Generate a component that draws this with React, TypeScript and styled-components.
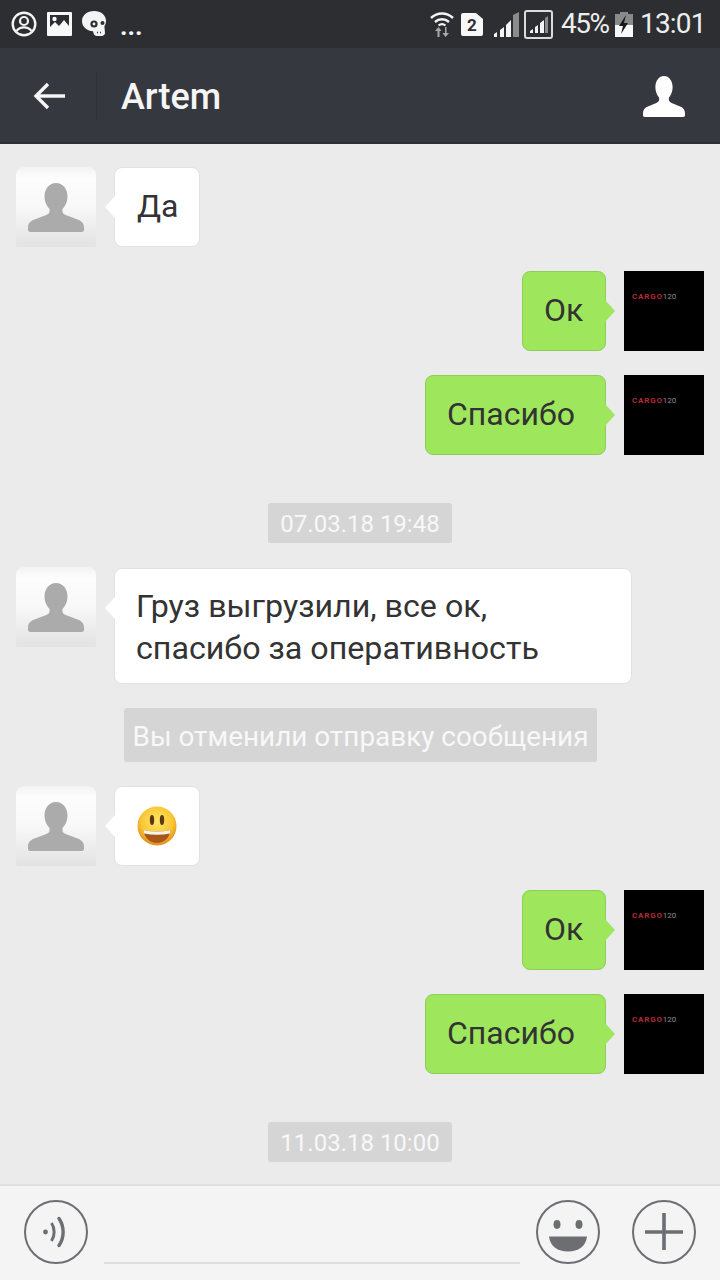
import React from "react";
import styled, { createGlobalStyle } from "styled-components";

const Global = createGlobalStyle`
  html, body { margin: 0; padding: 0; background: #ebebeb; }
  * { box-sizing: border-box; }
`;

const Screen = styled.div`
  width: 720px;
  height: 1280px;
  display: flex;
  flex-direction: column;
  overflow: hidden;
  font-family: Roboto, "Noto Sans", sans-serif;
  background: #ebebeb;
`;

const StatusBar = styled.div`
  height: 48px;
  flex: none;
  background: #2c2e31;
  display: flex;
  align-items: center;
  justify-content: space-between;
  padding: 0 16px 0 11px;
  color: #f4f4f4;
`;

const StatusGroup = styled.div<{ $gap: number }>`
  display: flex;
  align-items: center;
  gap: ${(p) => p.$gap}px;
`;

const Dots = styled.span`
  font-size: 26px;
  line-height: 28px;
  font-weight: 700;
  margin: 4px 0 0 1px;
`;

const StatusText = styled.span<{ $squeeze: number; $width: number }>`
  display: block;
  width: ${(p) => p.$width}px;
  font-size: 28px;
  line-height: 32px;
  white-space: nowrap;
  letter-spacing: ${(p) => p.$squeeze}px;
  color: #eeeeee;
`;

const Header = styled.header`
  height: 96px;
  flex: none;
  background: #36383f;
  border-bottom: 2px solid #2c2e33;
  display: flex;
  align-items: center;
  padding: 2px 35px 0 33px;
`;

const BackButton = styled.div`
  display: flex;
  align-items: center;
  width: 64px;
  height: 48px;
  border-right: 1px solid #2e3036;
`;

const Title = styled.h1`
  flex: 1;
  margin: 1px 0 0 24px;
  font-size: 36px;
  line-height: 40px;
  font-weight: 500;
  color: #f5f5f5;
`;

const Chat = styled.main`
  flex: 1;
  min-height: 0;
  display: flex;
  flex-direction: column;
  gap: 24px;
  padding: 23px 16px 0;
  overflow: hidden;
`;

const Row = styled.div<{ $mine?: boolean }>`
  display: flex;
  flex: none;
  align-items: flex-start;
  justify-content: ${(p) => (p.$mine ? "flex-end" : "flex-start")};
  gap: 18px;
`;

const Avatar = styled.div`
  width: 80px;
  height: 80px;
  flex: none;
  border-radius: 8px 8px 2px 2px;
  background: linear-gradient(#f3f3f3 0%, #fdfdfd 14%, #f8f8f8 50%, #e2e2e2 100%);
  display: flex;
  align-items: center;
  justify-content: center;
`;

const LogoAvatar = styled.div`
  width: 80px;
  height: 80px;
  flex: none;
  background: #000000;
  padding: 21px 0 0 8px;
  font-size: 8px;
  line-height: 9px;
  font-weight: 700;
  letter-spacing: 0.8px;
  color: #b52b35;
`;

const LogoLight = styled.span`
  color: #8d8d8d;
  font-weight: 400;
  letter-spacing: 0;
`;

const Bubble = styled.div<{ $mine?: boolean; $w: number }>`
  position: relative;
  width: ${(p) => p.$w}px;
  min-height: 80px;
  padding: 17px 0 0 ${(p) => (p.$mine ? 21 : 22)}px;
  border-radius: 8px;
  font-size: 32px;
  line-height: 42px;
  color: #333333;
  white-space: nowrap;
  background: ${(p) => (p.$mine ? "#9ee75d" : "#ffffff")};
  border: 1px solid ${(p) => (p.$mine ? "#8ccf52" : "#e2e2e2")};
  &::after {
    content: "";
    position: absolute;
    top: 28px;
    ${(p) => (p.$mine ? "right: -10px;" : "left: -10px;")}
    width: 0;
    height: 0;
    border-top: 11px solid transparent;
    border-bottom: 11px solid transparent;
    ${(p) =>
      p.$mine
        ? "border-left: 10px solid #9ee75d;"
        : "border-right: 10px solid #ffffff;"}
  }
`;

const TextBubble = styled(Bubble)`
  height: 116px;
  margin-top: 1px;
  padding: 16px 0 0 21px;
  font-size: 32.2px;
`;

const EmojiBubble = styled(Bubble)`
  height: 80px;
  padding: 0;
  display: flex;
  align-items: center;
  justify-content: center;
`;

const Pill = styled.div<{ $late?: boolean }>`
  align-self: center;
  flex: none;
  height: 40px;
  padding: 0 12px;
  margin-top: ${(p) => (p.$late ? "24px" : "0")};
  border-radius: 3px;
  background: #d5d5d5;
  color: #f8f8f8;
  font-size: 24px;
  line-height: 42px;
`;

const Notice = styled.div`
  align-self: center;
  flex: none;
  width: 473px;
  height: 54px;
  padding: 0 9px;
  border-radius: 3px;
  background: #d5d5d5;
  color: #f8f8f8;
  font-size: 27.9px;
  line-height: 57px;
  white-space: nowrap;
`;

const Composer = styled.footer`
  height: 96px;
  flex: none;
  background: #f4f4f4;
  border-top: 2px solid #e0e0e0;
  display: flex;
  align-items: center;
  gap: 16px;
  padding: 0 24px 2px;
`;

const RoundIcon = styled.svg`
  width: 64px;
  height: 64px;
  flex: none;
  display: block;
`;

const PlusIcon = styled(RoundIcon)`
  margin-left: 16px;
`;

const InputLine = styled.div`
  flex: 1;
  align-self: flex-end;
  height: 2px;
  margin-bottom: 14px;
  background: #dedede;
`;

const PersonGlyph = ({ w, h, color }: { w: number; h: number; color: string }) => (
  <svg width={w} height={h} viewBox="0 0 56 49" preserveAspectRatio="none" aria-hidden>
    <path
      fill={color}
      d="M28 0c6.500 0 11.500 5.500 11.500 13.500 0 5-2 9.500-5 12.500v2.500c0 2 1.800 3 4.500 4l10.500 4c4 1.500 6.500 4 6.500 8v2.500c0 1.300-1 2-2.500 2h-51C1 49 0 48.300 0 47v-2.500c0-4 2.500-6.500 6.500-8l10.500-4c2.700-1 4.500-2 4.500-4V26c-3-3-5-7.500-5-12.500C16.500 5.500 21.500 0 28 0z"
    />
  </svg>
);

const Other = () => (
  <Avatar>
    <PersonGlyph w={56} h={49} color="#ababab" />
  </Avatar>
);

const Logo = () => (
  <LogoAvatar>
    CARGO<LogoLight>120</LogoLight>
  </LogoAvatar>
);

const Smile = () => (
  <svg width="42" height="42" viewBox="0 0 42 42" aria-hidden>
    <defs>
      <radialGradient id="face" cx="50%" cy="38%" r="62%">
        <stop offset="0%" stopColor="#fde56a" />
        <stop offset="65%" stopColor="#f9c734" />
        <stop offset="100%" stopColor="#e28a1c" />
      </radialGradient>
    </defs>
    <circle cx="21" cy="21" r="19.500" fill="url(#face)" />
    <ellipse cx="16" cy="15" rx="2.200" ry="5" fill="#5b3a12" />
    <ellipse cx="26" cy="15" rx="2.200" ry="5" fill="#5b3a12" />
    <path d="M7.500 25c9 2 18 2 27 0-.8 8-6.500 13-13.500 13S8.300 33 7.500 25z" fill="#a8591a" />
    <path d="M7.500 25c9 2 18 2 27 0l-.7 3.600c-8.500 1.600-17 1.600-25.600 0z" fill="#f8f4ea" />
  </svg>
);

const IconStroke = "#6d6e72";

export default function App() {
  return (
    <Screen>
      <Global />
      <StatusBar>
        <StatusGroup $gap={10}>
          <svg width="26" height="26" viewBox="0 0 26 26" aria-hidden>
            <circle cx="13" cy="13" r="11.300" fill="none" stroke="#f4f4f4" strokeWidth="2.400" />
            <circle cx="13" cy="10" r="4" fill="none" stroke="#f4f4f4" strokeWidth="2.200" />
            <path d="M5.500 20c2-2.800 4.500-3.700 7.500-3.700s5.500.9 7.500 3.700" fill="none" stroke="#f4f4f4" strokeWidth="2.200" />
          </svg>
          <svg width="25" height="24" viewBox="0 0 25 24" aria-hidden>
            <path
              fill="#f8f8f8"
              fillRule="evenodd"
              d="M1 0h23a1 1 0 0 1 1 1v22a1 1 0 0 1-1 1H1a1 1 0 0 1-1-1V1a1 1 0 0 1 1-1zm2 3v12l5-5 4 4 5-6 5 6V3H3z"
            />
            <circle cx="7.500" cy="7" r="2.200" fill="#f8f8f8" />
          </svg>
          <svg width="27" height="26" viewBox="0 0 27 26" aria-hidden>
            <path
              fill="#f4f4f4"
              d="M12 0c7 0 12 4 12 10 0 2-.6 3.600-1.600 5l.6 7c0 1.600-1.600 3-3.200 3h-5c-1.600 0-3-1.400-3.300-3l-.5-1.800C4.400 20 0 15.500 0 10 0 4 5.500 0 12 0z"
            />
            <circle cx="12" cy="13" r="3.600" fill="#2c2e31" />
            <circle cx="12" cy="13" r="1.400" fill="#f4f4f4" />
            <circle cx="20.500" cy="12" r="2" fill="#2c2e31" />
            <path d="M15 21.500h1M18 21.500h1" stroke="#2c2e31" strokeWidth="1.500" />
          </svg>
          <Dots>...</Dots>
        </StatusGroup>
        <StatusGroup $gap={7}>
          <svg width="24" height="26" viewBox="0 0 24 26" aria-hidden>
            <path d="M1 7c6.500-6 15.500-6 22 0" fill="none" stroke="#f4f4f4" strokeWidth="2.400" />
            <path d="M5 11c4-3.600 10-3.600 14 0" fill="none" stroke="#f4f4f4" strokeWidth="2.400" />
            <path d="M8.500 14.500c2.200-1.800 4.800-1.800 7 0" fill="none" stroke="#f4f4f4" strokeWidth="2.200" />
            <path d="M7.500 26v-6H5l3.500-4 3 4H9.500v6zM16.500 16v6H19l-3.500 4-3-4h2.500v-6z" fill="#a9a9a9" />
          </svg>
          <svg width="22" height="23" viewBox="0 0 22 23" aria-hidden>
            <path d="M2 0h13l7 6v15a2 2 0 0 1-2 2H2a2 2 0 0 1-2-2V2a2 2 0 0 1 2-2z" fill="#f8f8f8" />
            <text x="11" y="18" textAnchor="middle" fontFamily="Roboto, sans-serif" fontWeight="700" fontSize="17" fill="#2c2e31">2</text>
          </svg>
          <svg width="26" height="26" viewBox="0 0 26 26" style={{ marginLeft: 4 }} aria-hidden>
            <path d="M19 4l6-3v25h-6z" fill="#8b8b8b" />
            <path d="M0 26v-3l3-2v5zM6 26v-7l4-3v10zM12 26V14l5-5v17z" fill="#f4f4f4" />
          </svg>
          <svg width="29" height="29" viewBox="0 0 29 29" style={{ marginLeft: -3 }} aria-hidden>
            <rect x="1" y="1" width="27" height="27" rx="2" fill="none" stroke="#dcdcdc" strokeWidth="2" />
            <path d="M21 8l3-2v17h-3z" fill="#8b8b8b" />
            <path d="M6 23v-2l3-2v4zM11 23v-6l3-2v8zM16 23V13l4-3v13z" fill="#f4f4f4" />
          </svg>
          <StatusText $squeeze={-1.5} $width={47} style={{ marginLeft: 1 }}>45%</StatusText>
          <svg width="18" height="25" viewBox="0 0 18 25" aria-hidden>
            <path d="M5 0h8v2h5v11H0V2h5z" fill="#8a8a8a" />
            <path d="M0 13h18v12H0z" fill="#f8f8f8" />
            <path d="M11 3L4 14h4l-2 8 7-11H9z" fill="#17181a" />
          </svg>
          <StatusText $squeeze={-0.8} $width={64}>13:01</StatusText>
        </StatusGroup>
      </StatusBar>

      <Header>
        <BackButton>
          <svg width="33" height="28" viewBox="0 0 33 28" aria-hidden>
            <path d="M32 14H3M15 2L3 14l12 12" fill="none" stroke="#f5f5f5" strokeWidth="3.400" />
          </svg>
        </BackButton>
        <Title>Artem</Title>
        <PersonGlyph w={42} h={41} color="#ffffff" />
      </Header>

      <Chat>
        <Row>
          <Other />
          <Bubble $w={86}>Да</Bubble>
        </Row>
        <Row $mine>
          <Bubble $mine $w={84}>Ок</Bubble>
          <Logo />
        </Row>
        <Row $mine>
          <Bubble $mine $w={181}>Спасибо</Bubble>
          <Logo />
        </Row>
        <Pill $late>07.03.18 19:48</Pill>
        <Row>
          <Other />
          <TextBubble $w={518}>
            Груз выгрузили, все ок,
            <br />
            спасибо за оперативность
          </TextBubble>
        </Row>
        <Notice>Вы отменили отправку сообщения</Notice>
        <Row>
          <Other />
          <EmojiBubble $w={86}>
            <Smile />
          </EmojiBubble>
        </Row>
        <Row $mine>
          <Bubble $mine $w={84}>Ок</Bubble>
          <Logo />
        </Row>
        <Row $mine>
          <Bubble $mine $w={181}>Спасибо</Bubble>
          <Logo />
        </Row>
        <Pill $late>11.03.18 10:00</Pill>
      </Chat>

      <Composer>
        <RoundIcon viewBox="0 0 64 64" aria-hidden>
          <circle cx="32" cy="32" r="31" fill="none" stroke={IconStroke} strokeWidth="2" />
          <circle cx="21.500" cy="32" r="2.400" fill={IconStroke} />
          <path d="M27.500 23c3.500 5 3.500 13 0 18" fill="none" stroke={IconStroke} strokeWidth="3" />
          <path d="M35 18.500c5.500 8 5.500 19 0 27" fill="none" stroke={IconStroke} strokeWidth="3.400" strokeLinecap="round" />
        </RoundIcon>
        <InputLine />
        <RoundIcon viewBox="0 0 64 64" aria-hidden>
          <circle cx="32" cy="32" r="31" fill="none" stroke={IconStroke} strokeWidth="2" />
          <ellipse cx="21" cy="24.500" rx="3.500" ry="4.400" fill={IconStroke} />
          <ellipse cx="43" cy="24.500" rx="3.500" ry="4.400" fill={IconStroke} />
          <path d="M13 36.500h38c-1 10-9 15-19 15s-18-5-19-15z" fill={IconStroke} />
        </RoundIcon>
        <PlusIcon viewBox="0 0 64 64" aria-hidden>
          <circle cx="32" cy="32" r="31" fill="none" stroke={IconStroke} strokeWidth="2" />
          <path d="M32 13v37M13 32h38" fill="none" stroke={IconStroke} strokeWidth="3.600" />
        </PlusIcon>
      </Composer>
    </Screen>
  );
}
